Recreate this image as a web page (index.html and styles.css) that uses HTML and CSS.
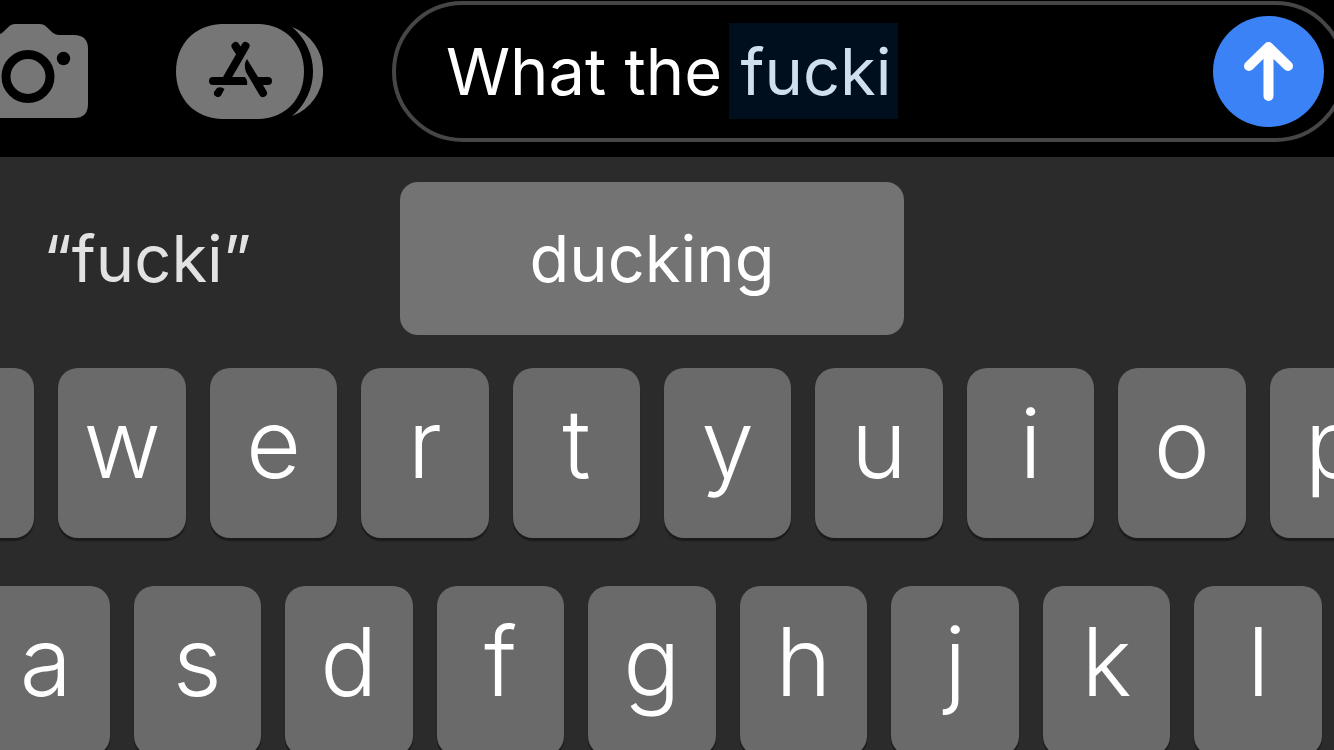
FILE: index.html
```html
<!DOCTYPE html>
<html lang="en">
<head>
  <meta charset="UTF-8" />
  <meta name="viewport" content="width=device-width, initial-scale=1" />
  <title>Messages</title>
  <link rel="stylesheet" href="styles.css">
</head>
<body>
  <form class="compose">
    <button type="button" class="icon-button camera" aria-label="Camera">
      <svg width="120" height="95" viewBox="0 0 120 95">
        <path fill="#767676" d="M14 11H28Q31 11 34 9L42 1.500Q44 0 47 0H72Q75 0 77 1.500L85 9Q88 11 91 11H106Q120 11 120 25V80Q120 94 106 94H14Q0 94 0 80V25Q0 11 14 11Z" />
        <circle cx="60" cy="52.500" r="22" fill="none" stroke="#000" stroke-width="9" />
        <circle cx="95.500" cy="34.500" r="6.700" />
      </svg>
    </button>

    <button type="button" class="icon-button apps" aria-label="Apps">
      <svg width="147" height="96" viewBox="0 0 147 96">
        <path fill="#767676" d="M45 0H84C109 1 128 20 128 47.500S109 94 84 95H45C19 94 0 75 0 47.500S19 1 45 0Z" />
        <path fill="#767676" d="M116 3A47.400 47.400 0 0 1 116 92A57.600 57.600 0 0 0 116 3Z" />
        <path fill="none" stroke="#000" stroke-width="8" stroke-linecap="round" d="M69.500 22L51 54M59.500 22L64 29" />
        <path d="M37 53H69Q72 57 71 61H37A4 4 0 0 1 37 53Z" />
        <path d="M71 35C68.500 38 68 44 70.500 49L83.500 71A4 4 0 0 0 90.500 67L87 61H92A4 4 0 0 0 92 53H82Z" />
        <path d="M41 64Q45 62 48.500 65L45 71.500A4 4 0 0 1 38 68Z" />
      </svg>
    </button>

    <div class="field">
      <input type="text" class="message" aria-label="Message" value="What the fucki">
      <span class="highlight"></span>
      <button type="submit" class="send" aria-label="Send">
        <svg width="111" height="111" viewBox="0 0 111 111">
          <path fill="none" stroke="#fff" stroke-width="10" stroke-linecap="round" stroke-linejoin="round" d="M55.500 32V80M36 50L55.500 31L75 50" />
        </svg>
      </button>
    </div>
  </form>

  <main class="keyboard">
    <div class="suggestions">
      <button class="suggestion">“fucki”</button>
      <button class="suggestion active">ducking</button>
    </div>

    <div class="row row-top">
      <button class="key">q</button>
      <button class="key">w</button>
      <button class="key">e</button>
      <button class="key">r</button>
      <button class="key">t</button>
      <button class="key">y</button>
      <button class="key">u</button>
      <button class="key">i</button>
      <button class="key">o</button>
      <button class="key">p</button>
    </div>

    <div class="row row-home">
      <button class="key">a</button>
      <button class="key">s</button>
      <button class="key">d</button>
      <button class="key">f</button>
      <button class="key">g</button>
      <button class="key">h</button>
      <button class="key">j</button>
      <button class="key">k</button>
      <button class="key">l</button>
    </div>
  </main>
</body>
</html>
```
FILE: styles.css
```css
* {
  box-sizing: border-box;
}

body {
  background-color: #2b2b2b;
  color: #ffffff;
  font-family: Inter, "Liberation Sans", Arial, sans-serif;
  margin: 0;
  height: 100vh;
  overflow: hidden;
}

button {
  border: none;
  padding: 0;
  color: inherit;
  font-family: inherit;
  cursor: pointer;
}

svg {
  display: block;
}

/* message bar */
.compose {
  display: flex;
  align-items: center;
  padding: 1px 0 15px;
  background-color: #000000;
}

.icon-button {
  flex: none;
  background: none;
}

.camera {
  margin-left: -32px;
  margin-right: 88px;
}

.apps {
  margin-right: 69px;
}

.field {
  position: relative;
  flex: 1;
  min-width: 0;
  display: flex;
  align-items: center;
  height: 141px;
  margin-right: -12px;
  padding: 0 18px 0 50px;
  border: 4px solid #464648;
  border-radius: 71px;
}

.message {
  flex: 1;
  min-width: 0;
  height: 96px;
  padding: 0;
  border: none;
  outline: none;
  background: none;
  color: inherit;
  font-family: inherit;
  font-size: 65px;
}

/* tint over the word being corrected */
.highlight {
  position: absolute;
  left: 333px;
  top: 18px;
  width: 169px;
  height: 96px;
  background-color: rgba(0, 81, 157, 0.184);
  pointer-events: none;
}

.send {
  flex: none;
  border-radius: 50%;
  background-color: #3b82f6;
}

/* keyboard */
.keyboard {
  padding-top: 25px;
}

.suggestions {
  display: grid;
  grid-template-columns: repeat(3, 1fr);
  margin: 0 -75px 33px -105px;
}

.suggestion {
  height: 153px;
  border-radius: 18px;
  background: none;
  color: #e2e2e2;
  font-size: 65px;
}

.suggestion.active {
  background-color: #737373;
  color: #ffffff;
}

.row {
  display: grid;
  grid-auto-flow: column;
  grid-auto-columns: 1fr;
  gap: 24px;
  margin: 0 -63px 48px -93px;
}

.row-home {
  padding: 0 75px;
}

.key {
  height: 170px;
  padding-bottom: 20px;
  border-radius: 20px;
  background-color: #6a6a6a;
  box-shadow: 0 3px 1px #1b1b1b;
  font-size: 95px;
  font-weight: 350;
}
```
